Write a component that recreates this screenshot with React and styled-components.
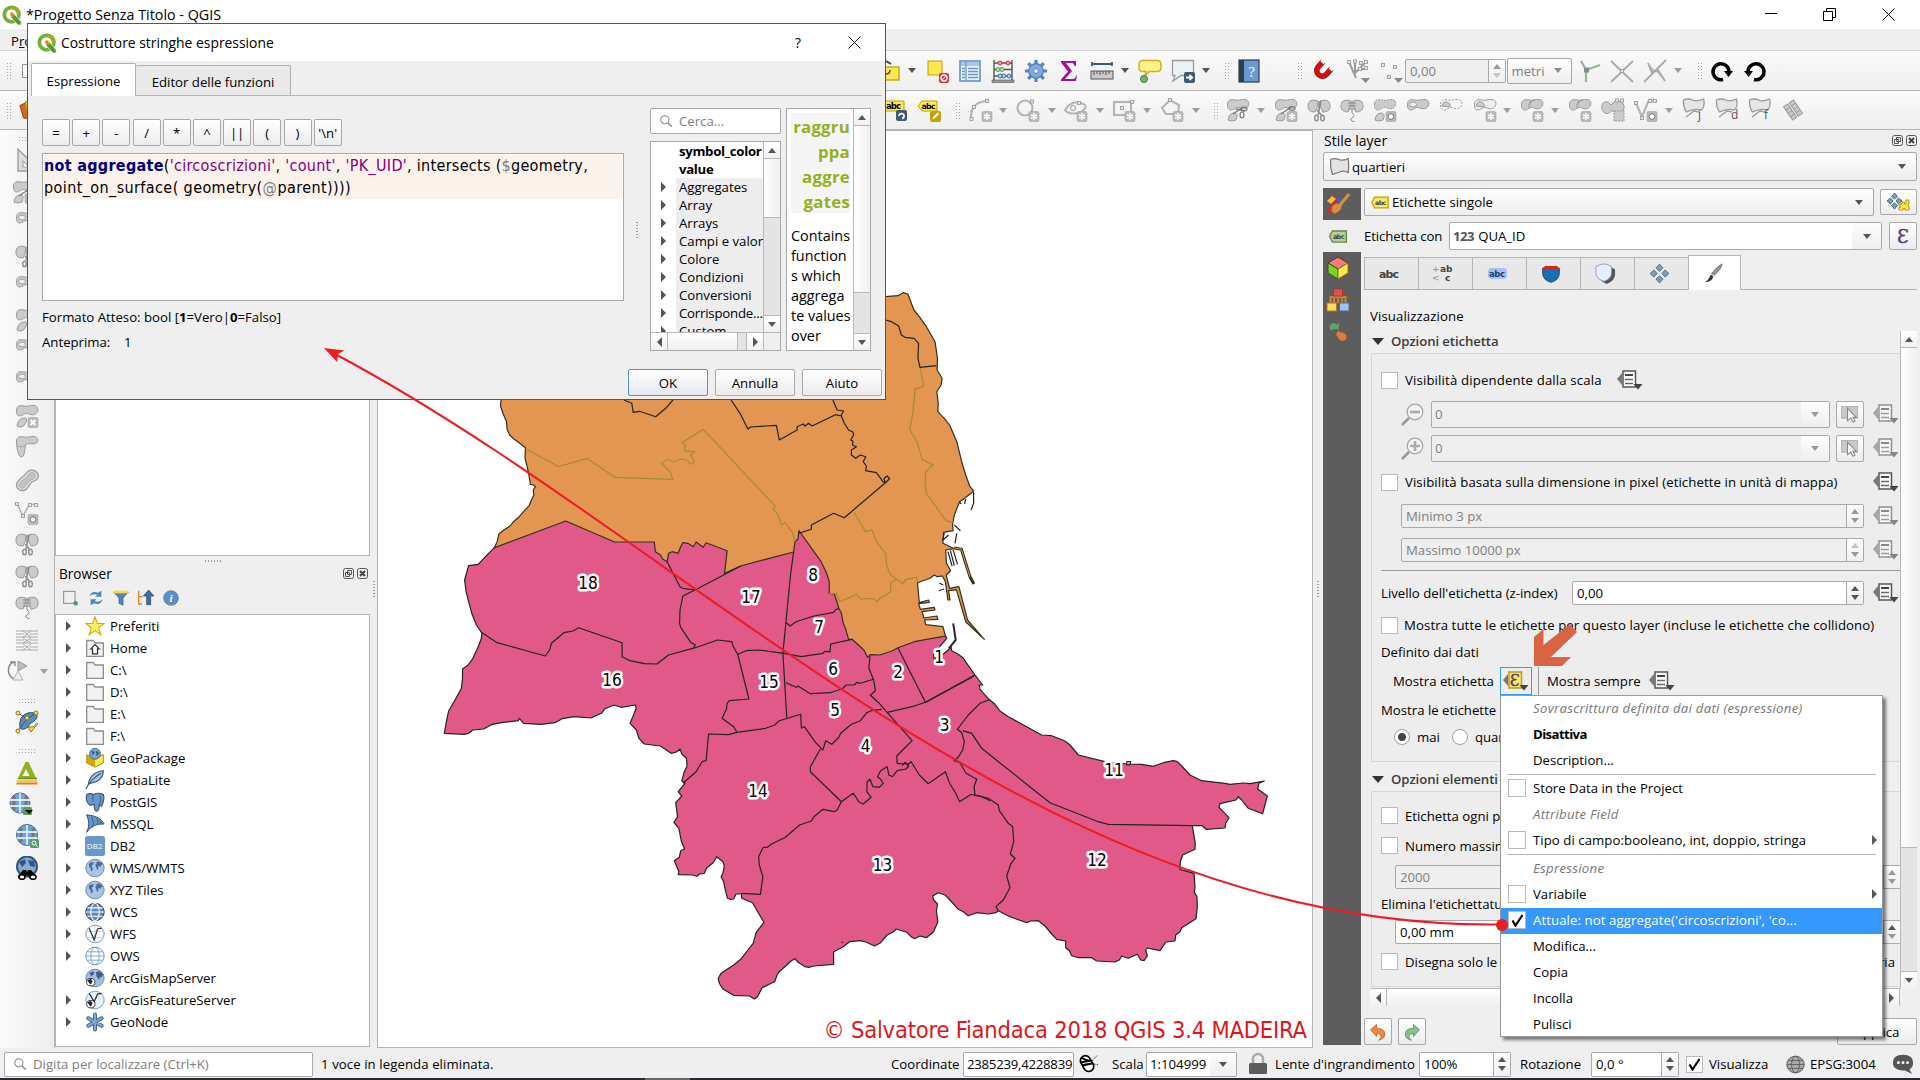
import React from 'react';
import styled, { createGlobalStyle, css } from 'styled-components';

const UI = "'Open Sans','Noto Sans',sans-serif";
const TAHOMA = "'DejaVu Sans Condensed','DejaVu Sans',sans-serif";

const Global = createGlobalStyle`
  *{box-sizing:border-box}
  html,body{margin:0;padding:0;background:#efefef;overflow:hidden}
  body{font:13.2px/18px ${UI};color:#000}
  svg{display:block;flex:none}
`;

/* ---------- generic pieces ---------- */
const Screen = styled.div`position:relative;width:1920px;height:1080px;display:flex;flex-direction:column;background:#efefef;overflow:hidden;`;
const TitleBar = styled.div`height:29px;background:#fff;display:flex;align-items:center;padding-left:2px;font-size:14.3px;flex:none;`;
const TitleText = styled.span`margin-left:4px;flex:1;white-space:nowrap;letter-spacing:${p => p.$ls || 0}px;`;
const WinButtons = styled.div`display:flex;gap:46px;padding-right:25px;`;
const MenuBar = styled.div`height:22px;padding:3px 0 0 11px;flex:none;border-bottom:1px solid #d5d5d5;u{text-decoration:underline}`;
const ToolRow = styled.div`height:${p => p.$h}px;flex:none;display:flex;align-items:center;background:linear-gradient(#fafafa,#efefef);border-bottom:${p => p.$b}px solid #b5b5b5;`;
const Slot = styled.div`flex:none;width:${p => p.$w}px;margin-left:${p => p.$ml}px;display:flex;justify-content:center;align-items:center;`;
const VSlot = styled.div`flex:none;height:${p => p.$w}px;margin-top:${p => p.$ml}px;margin-left:${p => p.$x || 0}px;display:flex;justify-content:center;align-items:center;`;
const Caret = styled.i`flex:none;width:0;height:0;border:${p => p.$s || 4.5}px solid transparent;border-top:${p => (p.$s || 4.5) + 1}px solid ${p => p.$c || '#555'};border-bottom:0;`;
const CaretUp = styled.i`flex:none;width:0;height:0;border:4.5px solid transparent;border-bottom:5.5px solid ${p => p.$c || '#555'};border-top:0;`;
const CaretR = styled.i`flex:none;width:0;height:0;border:5px solid transparent;border-left:5.5px solid #555;border-right:0;`;
const CaretL = styled.i`flex:none;width:0;height:0;border:5px solid transparent;border-right:5.5px solid #555;border-left:0;`;
const Grip = styled.i`width:${p => (p.$flat ? 18 : 5)}px;height:${p => (p.$flat ? 5 : 17)}px;background:radial-gradient(circle,#a9a9a9 .6px,transparent .9px) 0 0/3px 3px;`;
const Text = styled.span`white-space:nowrap;flex:none;width:${p => (p.$w ? p.$w + 'px' : 'auto')};margin-left:${p => p.$ml || 0}px;letter-spacing:${p => p.$ls || 0}px;`;

const box = css`border:1px solid #a9a9a9;border-radius:2px;display:flex;align-items:center;flex:none;`;
const Field = styled.div`${box}
  width:${p => p.$w}px;height:${p => p.$h || 25}px;margin-left:${p => p.$ml || 0}px;padding-left:${p => (p.$pl ?? 4)}px;letter-spacing:${p => p.$ls || 0}px;
  background:${p => (p.$grad ? 'linear-gradient(#fff,#ededed)' : p.$off ? '#efefef' : '#fff')};
  color:${p => (p.$off ? '#7f7f7f' : '#000')};border-color:${p => (p.$focus ? '#4b93df' : '#a9a9a9')};overflow:hidden;`;
const Grow = styled.span`flex:1;white-space:nowrap;overflow:hidden;`;
const Arrow = styled.span`align-self:stretch;flex:none;width:${p => p.$w || 25}px;display:flex;align-items:center;justify-content:center;background:${p => (p.$plain ? 'none' : 'linear-gradient(#fdfdfd,#efefef)')};`;
const Steps = styled.span`align-self:stretch;flex:none;width:17px;display:flex;flex-direction:column;align-items:center;justify-content:center;gap:4px;border-left:1px solid #a9a9a9;background:linear-gradient(#fdfdfd,#efefef);`;
const Button = styled.div`${box}justify-content:center;width:${p => p.$w}px;height:${p => p.$h}px;margin-left:${p => p.$ml || 0}px;
  background:${p => (p.$primary ? 'linear-gradient(#fff,#e3e8f0)' : 'linear-gradient(#fff,#ececec)')};border-color:${p => (p.$primary ? '#4b93df' : '#a9a9a9')};`;
const Check = styled.span`width:${p => p.$s || 17}px;height:${p => p.$s || 17}px;flex:none;background:#fff;border:1px solid #b9b9b9;display:flex;align-items:center;justify-content:center;`;
const Radio = styled.span`width:16px;height:16px;border-radius:50%;flex:none;border:1px solid #a0a0a0;background:${p => (p.$on ? 'radial-gradient(circle,#444 3.6px,#fff 4.4px)' : '#fff')};margin-left:${p => p.$ml || 0}px;`;
const Tick = () => <svg width="13" height="13" viewBox="0 0 13 13"><path d="M1.5 6.5L4.5 11.5L11.5 1" fill="none" stroke="#000" strokeWidth="2.2" /></svg>;

const Spin = ({ w, h = 24, ml, off, up, down, children }) => (
  <Field $w={w} $h={h} $ml={ml} $off={off}><Grow>{children}</Grow><Steps><CaretUp $c={up || (off ? '#999' : '#555')} /><Caret $c={down || (off ? '#999' : '#555')} /></Steps></Field>
);

/* ---------- scroll bars ---------- */
const SBarV = styled.div`width:${p => p.$w || 17}px;flex:none;display:flex;flex-direction:column;border-left:1px solid #b8b8b8;background:#e4e4e4;`;
const SBarH = styled.div`height:18px;flex:none;display:flex;border-top:1px solid #b8b8b8;background:#e4e4e4;`;
const SBtn = styled.div`flex:none;${p => (p.$h ? 'width' : 'height')}:17px;background:linear-gradient(#fff,#f1f1f1);display:flex;align-items:center;justify-content:center;
  border:0 solid #b8b8b8;${p => p.$e}:1px solid #b8b8b8;`;
const SHandle = styled.div`flex:none;${p => (p.$h ? 'width' : 'height')}:${p => p.$s}px;background:linear-gradient(to ${p => (p.$h ? 'bottom' : 'right')},#fff,#efefef);border-${p => (p.$h ? 'right' : 'bottom')}:1px solid #b8b8b8;`;
const SGap = styled.div`flex:1;`;

/* ---------- icons ---------- */
const I = ({ s = 24, w, h, vb = '0 0 24 24', children }) => <svg width={w || s} height={h || s} viewBox={vb}>{children}</svg>;
const Q = ({ s = 20 }) => (
  <I s={s}><circle cx="11.5" cy="11.5" r="8.7" fill="none" stroke="#7aae3a" strokeWidth="4.6" />
    <path d="M11.5 2.8a8.7 8.7 0 0 1 8.7 8.7" fill="none" stroke="#93b023" strokeWidth="4.6" />
    <path d="M11 11h4l8 9v4h-4L11 15z" fill="#589632" stroke="#fff" strokeWidth=".8" /><path d="M10 9h4.500l-1.300 1.300 2.500 2.500-2 2-2.500-2.500L10 13.500z" fill="#ee7913" /></I>
);
const G = '#9b9b9b';
const F = '#cbcbcb';
const Blob = ({ y = 0, d }) => <path transform={`translate(0 ${y})`} d="M1.500 6C1.500 2 5 1 9 2s6-1 10-.5S24 6 21.500 9s-6 1.500-9 .5-5 3-8 2.500S1.500 8.500 1.500 6z" fill={F} stroke={G} strokeDasharray={d} />;
const Badge = ({ t = 'star' }) => (
  <g><rect x="13" y="13.500" width="10" height="10" rx="1.500" fill="#b9b9b9" stroke="#a3a3a3" strokeWidth=".6" />
    {t === 'star' && <path d="M18 15v7M15 16.700l6 3.600M21 16.700l-6 3.600" stroke="#fff" strokeWidth="1.600" />}
    {t === 'x' && <path d="M15.500 16l5 5M20.500 16l-5 5" stroke="#fff" strokeWidth="2" />}
    {t === 'ring' && <circle cx="18" cy="18.500" r="2.800" fill="#fff" stroke="#777" />}</g>
);
const Scis = () => <g fill="none" stroke="#8b8b8b" strokeWidth="1.400"><path d="M12 3v11M14 3l-3 14M10 12l5 6" /><ellipse cx="9.500" cy="20" rx="1.800" ry="2.800" /><ellipse cx="15.500" cy="20" rx="1.800" ry="2.800" /></g>;
const Node = ({ x, y }) => <rect x={x - 1.5} y={y - 1.5} width="3" height="3" fill="#e8e8e8" stroke={G} strokeWidth=".9" />;
const Globe = ({ s = 20, fill = '#a9c4e4', line = '#33557c', land, shiny }) => (
  <I s={s}><ellipse cx="12" cy="12" rx="11" ry="10.500" fill={fill} stroke={land ? '#6a8fb8' : line} strokeWidth="1.200" />
    {!land && <g fill="none" stroke={shiny ? '#fff' : line} strokeWidth={shiny ? 1.3 : 1}><ellipse cx="12" cy="12" rx="5" ry="10.500" /><path d="M1 12h22M3 7h18M3 17h18" /></g>}
    {land && <path d="M4.500 7l3-2 3 .5-1 2.500-1.500 1 .5 2 1 1.800-1.200 3.200-1.300-.5-.3-3.500-1.700-1.200zM13.500 5l2.500-1.200 1.500 1.200 3 .5.5 2.500-2 1-.5 2.500-1.200-1.800-1.600.6.300 2.700-1.300 1.500-1.200-3.500-1.200-2.500 1.700-1.800z" fill="#4a6c94" />}</I>
);

const ic = {
  selpart: <I w={14} h={24} vb="10 0 14 24"><path d="M10 2l5 3" stroke="#5b3b6e" strokeWidth="2" /><rect x="8" y="8" width="15" height="13" fill="#fce94f" stroke="#c4a000" strokeWidth="1.300" /><path d="M10 15q4 0 4-4" stroke="#5b3b6e" strokeWidth="1.600" fill="none" /></I>,
  caret: <Caret />,
  gcaret: <Caret $c="#9d9d9d" />,
  grip: <Grip />,
  desel: <I><rect x="2" y="2" width="14" height="14" fill="#fce94f" stroke="#c4a000" /><rect x="13" y="14" width="10" height="10" rx="2" fill="#d8383f" /><circle cx="18" cy="19" r="3" fill="none" stroke="#fff" strokeWidth="1.300" /><path d="M16 21l4-4" stroke="#fff" /></I>,
  table: <I><rect x="2" y="2" width="20" height="20" fill="#e8f0f8" stroke="#5d8bbd" strokeWidth="1.500" /><rect x="3" y="3" width="18" height="4" fill="#a9c8e8" /><path d="M8 3v18M4 9.500h3M10 9.500h10M4 12.500h3M10 12.500h10M4 15.500h3M10 15.500h10M4 18.500h3M10 18.500h10" stroke="#6a98c9" strokeWidth="1.300" /></I>,
  abacus: <I><path d="M3 1v21M21 1v21M3 4h18M3 10.500h18M3 17h18" stroke="#555" strokeWidth="1.400" /><rect x="1" y="21" width="22" height="2.500" fill="#999" stroke="#555" strokeWidth=".6" /><g strokeWidth="1"><g fill="#f0a0a0" stroke="#b33"><circle cx="9" cy="4" r="2" /><circle cx="17" cy="4" r="2" /></g><g fill="#b7e6b0" stroke="#4a9a40"><circle cx="7" cy="10.500" r="2" /><circle cx="11" cy="10.500" r="2" /></g><g fill="#a9cdf0" stroke="#37729f"><circle cx="9" cy="17" r="2" /><circle cx="13" cy="17" r="2" /><circle cx="18" cy="17" r="2" /></g></g></I>,
  gear: <I><g stroke="#5585c0" strokeWidth="3.200"><path d="M12 1v22M1 12h22M4.200 4.200l15.600 15.600M19.800 4.200L4.200 19.800" /></g><circle cx="12" cy="12" r="7.200" fill="#7fabe0" stroke="#5585c0" strokeWidth="1.400" /><circle cx="12" cy="12" r="2.300" fill="#fff" stroke="#5585c0" /></I>,
  sigma: <I><path d="M4 2h15v5h-1.500q-.5-3-3-3H9l6 8-7 8h8q2.500 0 3-3.500H20L19 22H4v-1.500L11 12.500 4 3.500z" fill="#a111a1" /></I>,
  ruler: <I><path d="M2 5h20M2 3v4M22 3v4" stroke="#3d5a75" strokeWidth="1.800" /><rect x="1" y="12" width="22" height="8" fill="#c9c9c9" stroke="#555" /><path d="M4 12v4M7 12v3M10 12v4M13 12v3M16 12v4M19 12v3" stroke="#555" /></I>,
  tip: <I><path d="M5 1.500h14q4 0 4 4v3q0 4-4 4h-8L7 17l1-4.500H5q-4 0-4-4v-3q0-4 4-4z" fill="#fff08a" stroke="#d2b01c" strokeWidth="1.500" /><circle cx="6" cy="20" r="3.500" fill="#7ab070" stroke="#4c7a44" /></I>,
  note: <I><path d="M1.500 1.500h21v15H10L2 22l2-5.500H1.500z" fill="#eaf3f5" stroke="#9a9a9a" strokeWidth="1.300" /><rect x="13" y="13" width="11" height="11" rx="2" fill="#3d5a75" /><path d="M15 18.500h6M18.500 16l2.700 2.500-2.700 2.500" stroke="#fff" strokeWidth="1.800" fill="none" /></I>,
  book: <I><rect x="2" y="1" width="20" height="22" fill="#6a98cf" stroke="#2c3e50" strokeWidth="1.200" /><rect x="2" y="1" width="5" height="22" fill="#2c3e50" /><text x="14.500" y="17.500" fontSize="15" fill="#fff" textAnchor="middle" fontFamily="Liberation Serif">?</text></I>,
  magnet: <I><g transform="rotate(42 12 12)" fill="none"><path d="M6.500 4v7.500a5.500 5.500 0 0 0 11 0V4" stroke="#8e0b0b" strokeWidth="5.600" /><path d="M6.500 5v6.500a5.500 5.500 0 0 0 11 0V5" stroke="#d10f0f" strokeWidth="4.600" /><path d="M4.300 4.500h4.400M15.300 4.500h4.400" stroke="#fff" strokeWidth="2.600" /></g></I>,
  topo: <I w={26}><g stroke={G} strokeWidth="2" fill="none"><path d="M3 3l7 16M9 3v11l10-10M13 10h7" /></g><Node x={3} y={3} /><Node x={9} y={2.500} /><Node x={15} y={4} /><Node x={20} y={3} /><Node x={14} y={10} /><Node x={20} y={9} /><path d="M15 19h9l-4.500 5z" fill="#888" /></I>,
  dots: <I w={26}><Node x={4} y={6} /><Node x={16} y={8} /><Node x={10} y={18} /><path d="M15 19h9l-4.500 5z" fill="#888" /></I>,
  branch: <I><path d="M3 2l5 9v12M8 11l14-5" stroke="#7fc28a" strokeWidth="2.200" fill="none" /><rect x="6" y="8.500" width="5" height="5" fill="#8a8a8a" /></I>,
  cross: <I><path d="M1 2l22 21M23 2L1 23" stroke="#a9a9a9" strokeWidth="1.800" /><Node x={12} y={12} /></I>,
  cross2: <I><path d="M23 1L1 23M5 4l4 10 6-3 7 11" stroke="#a9a9a9" strokeWidth="1.800" fill="#bbb" /></I>,
  redo: <I><path d="M14 20.500A8 8 0 1 1 20 13" fill="none" stroke="#000" strokeWidth="3.500" /><path d="M15 12h9l-4.500 6z" /></I>,
  undo: <I><path d="M10 20.500A8 8 0 1 0 4 13" fill="none" stroke="#000" strokeWidth="3.500" /><path d="M9 12H0l4.500 6z" /></I>,
  abcA: <I w={22} h={24} vb="2 0 22 24"><path d="M-3 3h24v10H-3z" fill="#fce94f" stroke="#c4a000" /><text x="3" y="11" fontSize="8.500" fontWeight="700" fontFamily="DejaVu Sans" textLength="15">abc</text><rect x="13" y="12" width="11" height="11" rx="2" fill="#3d5a75" /><path d="M16 18a2.500 2.500 0 1 1 3 2.500" stroke="#fff" strokeWidth="1.800" fill="none" /></I>,
  abcB: <I><path d="M1 8l4-5h15v10H5z" fill="#fce94f" stroke="#c4a000" /><text x="4.500" y="11" fontSize="7.800" fontWeight="700" fontFamily="DejaVu Sans" textLength="14">abc</text><rect x="13" y="13" width="11" height="11" rx="2" fill="#c8a208" /><path d="M15.500 21.500l1-3 4-4 1.500 1.500-4 4z" fill="#fff" /></I>,
  curve: <I><path d="M2 21Q1 4 18 3" fill="none" stroke="#b5b5b5" strokeWidth="2.200" /><Node x={2.500} y={21} /><Node x={5} y={9} /><Node x={18} y={3} /><Badge /></I>,
  circ: <I><circle cx="9" cy="10" r="7.500" fill="none" stroke="#b5b5b5" strokeWidth="2.200" /><Node x={16} y={3.500} /><Badge /></I>,
  elli: <I><path d="M1 12Q8 2 17 5t0 9Q6 18 1 12z" fill="none" stroke="#b5b5b5" strokeWidth="2" /><circle cx="9" cy="10" r="2.500" fill="none" stroke={G} /><Node x={15} y={5} /><Badge /></I>,
  rect: <I><rect x="2" y="4" width="17" height="13" fill="none" stroke="#b5b5b5" strokeWidth="2.200" /><Node x={10} y={10} /><Node x={20} y={4} /><Badge /></I>,
  poly: <I><path d="M2 10L10 2l9 5-1 9H6z" fill="none" stroke="#b5b5b5" strokeWidth="2.200" /><Node x={10} y={2} /><Badge /></I>,
  b1: <I><Blob /><path d="M2 22q1-7 6-7t2 7q-4 2-8 0z" fill={F} stroke={G} /><path d="M7 16l10-7M10 11l9 2" stroke="#777" strokeWidth="1.300" /><ellipse cx="18" cy="11" rx="3" ry="1.800" fill="none" stroke="#777" strokeWidth="1.200" /><ellipse cx="16" cy="17" rx="2" ry="3" fill="none" stroke="#777" strokeWidth="1.200" /></I>,
  b2: <I><Blob /><path d="M2 22q1-7 6-7t2 7q-4 2-8 0z" fill={F} stroke={G} /><path d="M7 16l10-7" stroke="#777" strokeWidth="1.300" /><ellipse cx="18" cy="10.500" rx="3" ry="1.800" fill="none" stroke="#777" strokeWidth="1.200" /><Badge /></I>,
  sc: <I><path d="M11 3q-9-3-10 4t7 7q3-4 3-11zM13 3q9-3 10 4t-7 7q-3-4-3-11z" fill={F} stroke={G} /><Scis /></I>,
  stitch: <I><path d="M11 3q-9-3-10 4t7 7q3-4 3-11zM13 3q9-3 10 4t-7 7q-3-4-3-11z" fill={F} stroke={G} /><path d="M8 5h8M8 8h8M8 11h8M12 3v12q4 3 0 5t3 4" stroke="#8b8b8b" fill="none" /></I>,
  ring: <I><Blob d="2 1" /><path d="M2 22q1-7 6-7t2 7q-4 2-8 0z" fill={F} stroke={G} /><Badge t="ring" /></I>,
  hole: <I><Blob /><ellipse cx="7" cy="6.500" rx="3.500" ry="2.500" fill="#eee" stroke={G} /></I>,
  dash: <I><path d="M1.500 6C1.500 2 5 1 9 2s6-1 10-.5S24 6 21.500 9s-6 1.500-9 .5-5 3-8 2.500S1.500 8.500 1.500 6z" fill="none" stroke={G} strokeDasharray="2 1.500" /><path d="M3 8q1-5 5-4t3 5z" fill={F} stroke={G} /></I>,
  offs: <I><path d="M1.500 6C1.500 2 5 1 9 2s6-1 10-.5S24 6 21.500 9s-6 1.500-9 .5-5 3-8 2.500S1.500 8.500 1.500 6z" fill="#eee" stroke={G} /><path d="M3 8q1-5 5-4t3 5z" fill={F} stroke={G} /><Badge /></I>,
  mrg: <I><Blob /><path d="M9 10q0-8 6-8" fill="none" stroke={G} strokeWidth="1.300" /><Badge /></I>,
  msel: <I><path d="M1 8q0-5 6-4l3 3 4-4q8-1 9 5t-6 7q-5 0-6-3-3 5-7 3t-3-7z" fill={F} stroke={G} /><Node x={16} y={2.500} /><Node x={21} y={2.500} /><rect x="13" y="13" width="10" height="10" fill={F} stroke={G} strokeDasharray="2 1" /></I>,
  vert: <I><path d="M2 5l6 14L14 4l7-1" stroke="#b5b5b5" strokeWidth="2.200" fill="none" /><Node x={2} y={5} /><Node x={8} y={20} /><Node x={16} y={3} /><Node x={21} y={3} /><Badge t="ring" /></I>,
  vertL: <I><path d="M2 3l6 12L14 4l7-1" stroke="#b5b5b5" strokeWidth="1.600" fill="none" /><Node x={2} y={3} /><Node x={8} y={15} /><Node x={15} y={4} /><Node x={21} y={4} /><Badge t="ring" /></I>,
  sail: l => <I><path d="M1.500 2q5-2 9 0t11-1q2 7-2 11-8-2-15 2Q1 9 1.500 2z" fill="#e6e6e6" stroke={G} strokeWidth="1.300" /><path d="M4 19l8-6 5 1" fill="none" stroke={G} strokeWidth="1.300" /><text x="16" y="20.500" fontSize="12" fill="#555" fontFamily="Open Sans">{l}</text></I>,
  hatch: <I><g transform="rotate(-35 12 12)" fill={F} stroke={G}><rect x="6" y="4" width="5" height="16" /><rect x="13" y="4" width="5" height="16" /><path d="M6 8h5M6 12h5M6 16h5M13 8h5M13 12h5M13 16h5" /></g></I>,
  tri: <I><path d="M3 1v22h22z" fill="#dcdcdc" stroke={G} strokeWidth="1.300" /><path d="M8 13v6h6z" fill="#fff" stroke={G} /></I>,
  del: <I><Blob /><path d="M2 22q1-7 6-8t3 4-5 5q-3 0-4-1z" fill={F} stroke={G} /><Badge t="x" /></I>,
  resh: <I><path d="M1.500 6C1.500 2 5 1 9 2s6-1 10-.5S24 6 21.500 8s-8 0-10 1-1 13-5 13-5-12-5-16z" fill={F} stroke={G} /><path d="M2 11q5 2 9-1" stroke={G} strokeDasharray="2 1" fill="none" /></I>,
  off2: <I><path d="M1.500 17C1.500 11 8 10 10.500 6S18 .5 21.500 4s1.500 8-2.500 9-4 4-7 7.500-10.500 2.500-10.500-3.500z" fill="#ddd" stroke={G} strokeWidth="1.200" /><path d="M4 17c0-4 6-5 8.500-9s5-4.500 7-2.500.5 5-2.500 6-4.500 4-7 7-6 1.500-6-1.500z" fill="#c2c2c2" stroke="#b0b0b0" /></I>,
  grid: <I><path d="M1 3h22M1 9h22M1 15h22M1 22h22M1 6h8M15 6h8M1 12h8M15 12h8M1 19h8M15 19h8M8 3l8 6M16 3l-8 6M8 10l8 5M16 10l-8 5M8 16l8 6M16 16l-8 6" stroke="#a2a2a2" fill="none" strokeWidth=".9" /></I>,
  rot: <I><path d="M8 20A9 9 0 0 1 7 3M3 3h5v4" fill="none" stroke="#8b8b8b" strokeWidth="1.400" /><path d="M11 2l9 5-9 5z" fill="#bbb" stroke={G} /><path d="M11 12l-5 9h10z" fill="#eee" stroke="#b5b5b5" /></I>,
  topoc: <I><path d="M6 8q5-7 14-5 5 4-2 9-3 0-5 5-5 4-8 1-1-5 1-10z" fill="#5f89b8" stroke="#33557c" /><path d="M3 3l9 6 9-6M12 9L3 21" stroke="#33557c" fill="none" /><g fill="#fce94f" stroke="#8a7a10"><circle cx="3" cy="3" r="2" /><circle cx="21" cy="3" r="2" /><circle cx="12" cy="8" r="2" /><circle cx="3" cy="21" r="2" /></g><path d="M13 17l3 5 7-9-5 4z" fill="#fce94f" stroke="#8a7a10" /></I>,
  greentri: <I><path d="M10.500 1h3L21 17H3z" fill="#93b023" /><path d="M11 8l3.500 7h-7z" fill="#f3f3f3" /><path d="M3 17.500h19" stroke="#589632" strokeWidth="1.500" /><path d="M2 20h20" stroke="#f7c832" strokeWidth="2" /><path d="M1.500 22.500h21" stroke="#ee7913" strokeWidth="2" /></I>,
  gadd: <I><circle cx="11" cy="11" r="10" fill="#6fa3dc" stroke="#4a6c94" /><path d="M5 4v14M17 4v14" stroke="#777" strokeWidth="3" /><path d="M1 8h20M1 14h20M11 1v20" stroke="#fff" strokeWidth="1.300" /><rect x="14" y="15" width="9" height="8" rx="1.500" fill="#5a9a5a" /><path d="M16 18h8l-4 4z" /></I>,
  gfind: <I><circle cx="12" cy="11" r="10.500" fill="#6fa3dc" stroke="#4a6c94" /><path d="M6 4v14M18 4v14" stroke="#777" strokeWidth="3" /><path d="M2 8h20M2 14h20M12 1v20" stroke="#fff" strokeWidth="1.300" /><rect x="15" y="15" width="9" height="9" rx="1.500" fill="#5a9a6a" /><circle cx="19" cy="19" r="2" fill="none" stroke="#fff" /><path d="M20.500 20.500l2 2" stroke="#fff" /></I>,
  gbin: <I><circle cx="12" cy="10.500" r="10" fill="#88aad0" stroke="#33557c" strokeWidth="2" /><path d="M4 6l6-3 1 4-4 4zM13 4l6 1 1 6-5-1z" fill="#33557c" /><path d="M8 14h3l1 2 1-2h3l5 6v2h-6l-3-3-3 3H3v-2z" /><ellipse cx="7" cy="21" rx="3" ry="2.300" fill="#fff" stroke="#000" strokeWidth="1.500" /><ellipse cx="18" cy="21" rx="3" ry="2.300" fill="#fff" stroke="#000" strokeWidth="1.500" /></I>,
};

const Placed = ({ items, start = 0, vertical }) => {
  let end = start;
  return items.map(([c, w, node, x], i) => {
    const ml = c - w / 2 - end;
    end = c + w / 2;
    return vertical ? <VSlot key={i} $w={w} $ml={ml} $x={x}>{node}</VSlot> : <Slot key={i} $w={w} $ml={ml}>{node}</Slot>;
  });
};

const Lock = <I s={24}><path d="M7 11V7a5 5 0 0 1 10 0v4" fill="none" stroke="#aaa" strokeWidth="2.500" /><rect x="3" y="11" width="18" height="11" rx="1.500" fill="#5c5c5c" /></I>;
const Mag = ({ s = 16 }) => <I s={s}><circle cx="10" cy="10" r="7" fill="none" stroke="#8a8a8a" strokeWidth="1.800" /><path d="M15 15l7 7" stroke="#8a8a8a" strokeWidth="2.400" /></I>;

const bar1 = [
  [893, 14, ic.selpart], [912, 10, ic.caret], [938, 24, ic.desel], [970, 24, ic.table], [1003, 24, ic.abacus], [1036, 24, ic.gear], [1069, 24, ic.sigma], [1102, 24, ic.ruler], [1125, 10, ic.caret],
  [1150, 24, ic.tip], [1183, 24, ic.note], [1206, 10, ic.caret], [1226, 5, ic.grip], [1249, 24, ic.book], [1299, 5, ic.grip], [1322, 22, ic.magnet], [1358, 26, ic.topo], [1391, 26, ic.dots],
  [1455.500, 101, <Spin w={101} off down="#c4c4c4">0,00</Spin>], [1539, 65, <Field $w={65} $h={26} $grad $off><Text>metri</Text><Grow /><Arrow $plain $w={25}><Caret $c="#8b8b8b" /></Arrow></Field>],
  [1590, 24, ic.branch], [1622, 24, ic.cross], [1655, 24, ic.cross2], [1678, 10, ic.gcaret], [1699, 5, ic.grip], [1721, 22, ic.redo], [1756, 22, ic.undo],
];
const bar2 = [
  [896, 22, ic.abcA], [929, 24, ic.abcB], [957, 5, ic.grip], [981, 22, ic.curve], [1003, 10, ic.gcaret], [1028, 22, ic.circ], [1052, 10, ic.gcaret], [1076, 22, ic.elli], [1100, 10, ic.gcaret], [1124, 22, ic.rect], [1147, 10, ic.gcaret],
  [1172, 22, ic.poly], [1196, 10, ic.gcaret], [1215, 5, ic.grip], [1238, 24, ic.b1], [1261, 10, ic.gcaret], [1286, 24, ic.b2], [1319, 24, ic.sc], [1352, 24, ic.stitch], [1385, 24, ic.ring], [1418, 24, ic.hole], [1451, 24, ic.dash],
  [1485, 24, ic.offs], [1507, 10, ic.gcaret], [1532, 24, ic.mrg], [1555, 10, ic.gcaret], [1580, 24, ic.mrg], [1613, 24, ic.msel], [1646, 24, ic.vert], [1669, 10, ic.gcaret], [1694, 24, ic.sail('j')], [1727, 24, ic.sail('d')], [1760, 24, ic.sail('f')], [1793, 20, ic.hatch],
];
const side = [
  [138, 5, <Grip $flat />], [160, 24, ic.tri], [192, 24, ic.b2, -6], [223, 20, ic.hole], [256, 24, ic.sc], [287, 22, ic.hole], [320, 24, ic.del], [350, 22, ic.hole], [382, 22, ic.hole],
  [416, 24, ic.del], [447, 24, ic.resh], [480, 24, ic.off2], [513, 24, ic.vertL], [544, 24, ic.sc], [576, 24, ic.sc], [607, 24, ic.stitch], [640, 22, ic.grid],
  [671, 24, <>{ic.rot}<Slot $w={10} $ml={8}>{ic.gcaret}</Slot></>, 2], [700, 5, <Grip $flat />], [722, 24, ic.topoc], [750, 5, <Grip $flat />], [773, 24, ic.greentri], [804, 24, ic.gadd, -13], [836, 24, ic.gfind], [868, 24, ic.gbin],
];

/* ---------- left column ---------- */
const Main = styled.div`display:flex;height:918px;flex:none;`;
const SideBar = styled.div`width:54px;flex:none;background:linear-gradient(to right,#fbfbfb,#ededed);overflow:hidden;`;
const LeftDock = styled.div`width:316px;flex:none;display:flex;flex-direction:column;border-left:1px solid #b5b5b5;`;
const LayersBox = styled.div`height:426px;flex:none;background:#fff;border:1px solid #b5b5b5;`;
const HSplit = styled.div`height:9px;display:flex;justify-content:center;align-items:center;flex:none;`;
const DotsH = styled.i`width:18px;height:2px;background:radial-gradient(circle,#9c9c9c .7px,transparent 1px) 0 0/3px 2px;`;
const DotsV = styled.i`width:2px;height:18px;background:radial-gradient(circle,#9c9c9c .7px,transparent 1px) 0 0/2px 3px;`;
const DockTitle = styled.div`height:${p => p.$h}px;flex:none;display:flex;align-items:center;font-size:${p => p.$fs || 13.6}px;padding:0 ${p => p.$pr}px 0 ${p => p.$pl}px;gap:3px;`;
const DockBtn = () => (<><svg width="11" height="11" viewBox="0 0 11 11"><rect x=".5" y=".5" width="10" height="10" rx="2" fill="none" stroke="#555" /><path d="M4.500 2.500h4v4h-4zM2.500 4.500h4v4h-4z" fill="none" stroke="#555" /></svg>
  <svg width="11" height="11" viewBox="0 0 11 11"><rect x=".5" y=".5" width="10" height="10" rx="2" fill="none" stroke="#555" /><path d="M3 3l5 5M8 3l-5 5" stroke="#444" strokeWidth="2" /></svg></>);
const BrowserTools = styled.div`height:32px;display:flex;gap:9px;padding:0 0 1px 8px;align-items:center;flex:none;`;
const Tree = styled.div`height:433px;flex:none;background:#fff;border:1px solid #b5b5b5;`;
const TreeRow = styled.div`height:22px;display:flex;align-items:center;padding-left:10px;`;
const TreeArrow = styled.span`width:19px;flex:none;display:flex;visibility:${p => (p.$hide ? 'hidden' : 'visible')};`;

const Folder = ({ home }) => <I s={20}><path d="M2 22V3h8l2 3h10v16z" fill="#f2f2f2" stroke="#8f8f8f" strokeWidth="1.600" />{home && <path d="M7 13l5-5 5 5h-2v6H9v-6z" fill="#fff" stroke="#333" strokeWidth="1.500" />}</I>;
const browser = [
  ['Preferiti', <I s={20}><path d="M12 1l2.800 8H23l-6.500 5L19 22.500 12 17.500 5 22.500 7.500 14 1 9h8.200z" fill="#fdf06a" stroke="#d0ac00" strokeWidth="1.300" /></I>],
  ['Home', <Folder home />], ['C:\\', <Folder />], ['D:\\', <Folder />], ['E:\\', <Folder />], ['F:\\', <Folder />],
  ['GeoPackage', <I s={20}><path d="M2 8l10 5 10-5v10l-10 5L2 18z" fill="#fce94f" stroke="#8a7a10" /><path d="M2 8l10 5v10L2 18z" fill="#d5a900" /><circle cx="12" cy="7" r="6.500" fill="#7fa6d3" stroke="#33557c" /><path d="M8 3l4 2-3 4zM13 3l4 3-3 4z" fill="#33557c" /></I>],
  ['SpatiaLite', <I s={20}><path d="M4 17Q6 3 22 1q0 12-15 15z" fill="#a9c3e2" stroke="#33557c" strokeWidth="1.300" /><path d="M1 23Q6 12 19 4" stroke="#33557c" strokeWidth="1.300" fill="none" /></I>],
  ['PostGIS', <I s={20}><path d="M2 3q4-2 8 0 6-3 12 0 2 6-2 14l-3-1q0 7-3 7t-3-8l-5 1Q0 11 2 3z" fill="#6a95c6" stroke="#33557c" strokeWidth="1.300" /><path d="M10 3q-2 5 0 9M18 4q2 5-1 12" stroke="#33557c" fill="none" /></I>],
  ['MSSQL', <I s={20}><path d="M2 1q16 1 21 11-14-1-21 10Q7 12 2 1z" fill="#6a95c6" stroke="#33557c" strokeWidth="1.200" /><path d="M8 3q4 7 1 13M14 5q3 5 1 8M18 8q2 3 1 4" stroke="#33557c" fill="none" /></I>],
  ['DB2', <I s={20}><rect width="24" height="24" rx="3" fill="#6a98c9" /><text x="2" y="15" fontSize="9.500" fill="#fff" fontFamily="Open Sans" textLength="19">DB2</text></I>],
  ['WMS/WMTS', <Globe land />], ['XYZ Tiles', <Globe land />], ['WCS', <Globe fill="#5f89b8" line="#22405f" shiny />],
  ['WFS', <I s={20}><ellipse cx="12" cy="12" rx="11" ry="10.500" fill="#fff" stroke="#6a98c9" strokeWidth="1.200" /><path d="M1 9h22M1 16h22M12 1v22" stroke="#b7d0ea" /><path d="M5 5l6 14 4-13 5-1" stroke="#333" strokeWidth="1.500" fill="none" /></I>],
  ['OWS', <Globe fill="#fff" line="#6a98c9" />],
  ['ArcGisMapServer', <I s={20}><ellipse cx="12" cy="12" rx="11" ry="10.500" fill="#a3bfe0" stroke="#6a8fb8" strokeWidth="1.200" /><path d="M5 6l5-2 1 3-3 3zM13 5l4-1.500 5 4-2 4-2-1-1 4-3-4z" fill="#3f6088" /><ellipse cx="7" cy="17" rx="5" ry="4.500" fill="#fff" stroke="#222" /><path d="M3 15l4-2 2 3-2 4-2-2z" fill="#222" /></I>, true],
  ['ArcGisFeatureServer', <I s={20}><ellipse cx="12" cy="12" rx="11" ry="10.500" fill="#e8f1fa" stroke="#6a98c9" /><path d="M5 4l6 10 4-9 5-1" stroke="#333" strokeWidth="1.500" fill="none" /><ellipse cx="7" cy="17" rx="5" ry="4.500" fill="#fff" stroke="#222" /><path d="M3 15l4-2 2 3-2 4-2-2z" fill="#222" /></I>],
  ['GeoNode', <I s={20}><g stroke="#33557c" strokeWidth="4.600" strokeLinecap="round"><path d="M12 3v18M4 7.500l16 9M20 7.500l-16 9" /></g><g stroke="#7fa6d3" strokeWidth="2.800" strokeLinecap="round"><path d="M12 3v18M4 7.500l16 9M20 7.500l-16 9" /></g></I>],
];

/* ---------- map ---------- */
/* the outlines were digitised on three sheets; each has its own origin and scale */
const sheets = { A: [430, 280, 2.8, 3], B: [430, 600, 2.8, 3], C: [880, 560, 3, 3] };
const pts = (...parts) => parts.map(s => {
  const [ox, oy, sx, sy] = sheets[s[0]];
  return s.slice(2).split(' ').map(p => { const [x, y] = p.split(',').map(Number); return `${(ox + x / sx).toFixed(1)},${(oy + y / sy).toFixed(1)}`; }).join(' ');
}).join(' ');

const PINK = pts(
  'A 180,803 155,830 135,853 108,857 97,900 101,935 108,965 118,1003 130,1035 146,1060',
  'B 146,98 143,118 135,140 120,175 107,195 91,207 91,235 88,265 70,300 52,333 46,365 40,400 95,403 108,400 120,390 150,387 172,374 200,368 247,362 250,355 262,370 310,373 350,368 370,356 405,350 450,354 480,340 490,326 515,315 535,322 575,315 577,325 570,345 560,370 578,390 585,415 600,432 645,438 675,460 690,456 700,447 705,462 718,475 720,498 712,515 705,542 714,550 695,575 705,588 688,608 693,650 683,667 697,685 703,720 706,730 713,747 702,752 698,772 684,782 697,815 695,824 735,825 747,829 755,822 768,820 775,803 793,788 803,770 820,785 824,797 820,820 815,830 822,845 828,875 833,895 840,898 850,897 857,882 872,882 873,895 903,908 920,940 935,967 913,998 905,1030 890,1050 870,1078 850,1095 815,1120 807,1135 810,1150 820,1167 850,1186 895,1188 908,1197 917,1190 930,1163 965,1145 972,1125 978,1115 1012,1082 1022,1076 1030,1086 1050,1100 1060,1102 1075,1098 1130,1093 1130,1055 1155,1042 1175,1025 1205,1022 1220,1026 1245,1038 1262,1028 1280,1005 1298,995 1305,987 1335,997 1347,1010 1357,1016 1372,1008 1390,1013 1410,995 1422,965 1418,935 1421,912',
  'C 161,1020 158,1008 175,998 195,1005 210,1020 235,1048 250,1055 265,1067 290,1058 325,1062 348,1058 355,1052 385,1068 440,1088 452,1083 475,1082 495,1098 515,1122 530,1138 557,1143 557,1163 568,1172 575,1187 595,1193 635,1193 650,1203 705,1206 718,1200 725,1188 745,1195 772,1183 782,1200 792,1202 802,1188 797,1170 802,1164 840,1172 858,1146 885,1143 887,1125 900,1115 905,1103 948,1076 952,1040 951,1010 943,998 945,980 942,940 900,928 901,905 908,885 945,868 946,850 937,797 967,797 978,808 1035,804 1037,790 1047,773 1017,742 1020,731 1068,720 1075,710 1085,720 1105,745 1148,761 1162,708 1133,687 1137,670 1153,663 1110,671 1090,669 1050,673 1035,670 965,662 930,645 905,618 890,604 880,602 850,608 820,619 785,613 740,612 675,605 595,585 570,555 555,543 515,527 485,525 440,500 385,470 360,453 345,433 327,418 300,388 298,375 308,375 285,345 250,295 235,283 215,272 213,260 205,270 178,292 162,295 160,284 175,265 200,235 197,228',
  'A 1300,1090 1100,700 600,760 400,700');
const ORANGE = pts('A 205,300 200,350 197,378 205,402 214,424 216,448 223,465 236,478 255,493 267,503 266,535 272,560 277,585 281,613 290,615 295,620 289,630 291,645 284,660 278,676 262,695 248,712 232,727 224,738 207,750 193,762 188,785 180,803 380,723 517,786 628,786 631,815 645,825 652,838 664,845 668,820 678,815 695,820 702,800 708,788 722,790 737,800 745,786 765,802 773,788 832,812 829,840 825,880 870,858 950,835 1018,816 1022,785 1030,778 1033,752 1040,762 1075,815 1095,845 1110,878 1118,905 1118,940 1132,942 1145,985 1152,1000 1157,1030 1163,1045 1172,1078 1182,1078 1215,1110 1225,1132 1232,1124 1260,1125 1295,1112 1310,1103 1360,1084 1443,1068 1436,1040 1388,1034 1385,1020 1422,1018 1419,1008 1383,1014 1378,995 1414,990 1412,982 1373,988 1368,971 1398,967 1396,960 1370,968 1365,908 1400,895 1412,885 1420,890 1435,888 1443,905 1450,960 1456,960 1452,932 1474,929 1500,1025 1552,1078 1505,1020 1481,920 1455,925 1445,885 1458,872 1446,850 1444,810 1468,806 1436,790 1438,757 1465,752 1463,735 1468,705 1483,665 1497,655 1515,640 1522,632 1512,620 1500,585 1490,550 1475,485 1455,435 1440,415 1422,395 1423,370 1419,335 1431,315 1434,295 1420,270 1421,235 1414,185 1390,140 1370,110 1355,90 1338,42 1325,38 1310,47 1275,50 1200,60');
const DARK = [
  'A 543,360 565,370 569,397 587,394 632,410 660,385 680,360',
  'A 843,360 868,400 890,447 897,441 970,436 978,480 1028,450 1028,440 1045,432 1050,438 1060,430 1070,438 1135,404 1152,408 1160,430 1172,450 1184,456 1186,466 1178,480 1184,484 1183,495 1194,500 1180,510 1180,525 1192,535 1205,525 1220,530 1213,545 1222,558 1220,572 1250,578 1262,595 1268,605 1275,608 1287,596 1280,588 1271,596 1275,608 1160,713 1130,700 1068,735 1068,748 1033,760',
  'A 1128,360 1140,390 1158,393 1150,408', 'A 1275,120 1290,124 1312,138 1320,165 1330,172 1355,175 1368,190 1366,235 1372,262 1418,257',
  'B 146,98 188,128 323,168 335,150 340,130 375,98 400,93 416,83 538,128 538,170 560,182 600,191 635,192 668,165 743,143 805,120 845,125 848,137 862,165 893,297 838,302 832,310 830,328 818,355 850,380 860,397',
  'A 664,845 700,920 708,925 742,930 870,858', 'A 742,930 708,948 700,990 699,1030 702,1042 730,1087 743,1095 738,1103', 'B 862,163 885,152 920,150 990,160 1040,170 1100,160 1105,154 1120,155 1122,132 1182,118',
  'A 1018,816 1010,880 997,1020 988,1120', 'B 988,160 999,353', 'A 998,1028 1008,1038 1025,1025 1075,1008 1130,997 1135,990 1145,985',
  'B 997,248 1025,262 1030,258 1065,281 1120,278 1155,266 1165,255 1188,255 1195,247 1205,250 1242,238',
  'B 1232,168 1229,205 1242,240 1247,272 1233,286 1258,310 1280,337 1350,422 1307,468 1308,490 1325,492 1337,490', 'B 1310,143 1387,307 1350,320 1280,337', 'B 1387,307 1525,226', 'C 285,345 270,355 135,428',
  'B 1265,328 1235,332 1223,338 1205,362 1180,373 1150,400 1145,412 1125,433 1108,422 1100,450 1080,428 1048,380 1040,384 1038,343 978,362 965,375 940,385 860,397 835,404 780,402 773,482 762,485 745,515 708,550',
  'B 1093,447 1065,500 1065,515 1152,605', 'B 1152,605 1185,580 1193,592 1200,605 1213,612 1235,592 1223,575 1224,545 1232,538 1240,560 1258,562 1269,550 1262,538 1253,530 1262,512 1280,500 1285,525 1295,530 1308,512 1333,507 1340,498 1330,487 1322,497', 'B 1337,495 1347,485 1370,525 1395,551 1443,515 1455,550 1472,580 1483,605 1515,583 1545,590 1568,602',
  'B 1152,605 1140,630 1133,635 1100,628 1075,650 1068,663 1035,675 995,712 955,733 945,742 933,742 920,770 922,795 932,830 925,883 872,880',
  'C 327,420 300,430 265,465 232,508 245,518 253,545 248,570 235,592 222,602 240,608 258,640 290,658 282,680 285,705 325,715 355,735 358,752 385,790 398,800 401,845 391,882 405,895 393,910 380,948 390,983 370,1020 348,1040 355,1052',
  'C 248,512 275,520 305,565 455,685 510,728 655,785 685,793 937,797',
  'A 1468,735 1485,752', 'A 1475,760 1470,790', 'A 1440,757 1436,780 1452,765', 'A 1450,815 1462,858', 'A 1457,812 1468,857', 'A 1465,810 1477,853', 'A 1522,635 1522,670 1515,690', 'A 1500,657 1497,672', 'A 1483,667 1488,672', 'C 176,92 192,87', 'C 178,70 190,74', 'C 740,605 752,605 750,615 740,615 740,605', 'B 1152,1027 1157,1027',
];
const OLIVE = [
  'A 270,508 360,560 440,535 518,592 680,598 672,575 648,550 665,538 685,545 700,537 718,540 730,553 740,545 730,525 740,515 712,512 715,495 706,488 725,475 765,448 968,680 960,685 975,705 985,735 995,728 1015,758 1022,785',
  'A 1372,262 1382,318 1358,328 1352,400 1343,448 1365,490 1378,538 1408,555 1388,575 1386,610 1390,640 1445,722 1465,727',
  'A 1187,697 1220,755 1238,750 1250,785 1275,820 1280,860 1290,885 1325,912 1330,900 1362,892 1365,905', 'A 1118,940 1138,940 1147,965 1195,943 1205,957 1240,955 1252,965 1260,955 1290,935 1290,910 1308,897',
];
const labels = [[18, 588, 583], [17, 751, 597], [8, 813, 575], [7, 819, 627], [6, 833, 669], [15, 769, 682], [16, 612, 680], [5, 835, 709.500], [4, 865.500, 746], [2, 898, 672], [1, 939, 657], [3, 944.500, 725], [11, 1114, 769.500], [12, 1097, 860], [13, 882.500, 864.500], [14, 758, 791]];

const VSplit = styled.div`width:${p => p.$w}px;flex:none;display:flex;align-items:${p => (p.$top ? 'flex-start' : 'center')};justify-content:center;padding-top:${p => p.$top || 0}px;`;
const Canvas = styled.div`width:936px;flex:none;background:#fff;border:1px solid #b5b5b5;`;

const MapView = () => (
  <Canvas>
    <svg width="934" height="915" viewBox="378 131 934 915">
      <polygon points={PINK} fill="#e15989" stroke="#232323" strokeWidth="1.200" strokeLinejoin="round" />
      <polygon points={ORANGE} fill="#e29652" stroke="#35301c" strokeWidth="1.200" strokeLinejoin="round" />
      <g fill="none" stroke="#a98a34" strokeWidth="1.200">{OLIVE.map(l => <polyline key={l} points={pts(l)} />)}</g>
      <g fill="none" stroke="#232323" strokeWidth="1.200" strokeLinejoin="round">{DARK.map(l => <polyline key={l} points={pts(l)} />)}</g>
      <polyline points={pts('A 1468,804 1488,808 1500,850 1512,890 1523,912')} fill="none" stroke="#35301c" strokeWidth="3" />
      <polyline points={pts('A 1468,804 1488,808 1500,850 1512,890')} fill="none" stroke="#e29652" strokeWidth="1" />
      <polyline points={pts('A 1465,1030 1472,1080 1453,1105')} fill="none" stroke="#35232a" strokeWidth="2" />
      <g fontFamily={TAHOMA} fontSize="17" textAnchor="middle" stroke="#fff" strokeWidth="5" strokeLinejoin="round" paintOrder="stroke">
        {labels.map(([n, x, y]) => <text key={n} x={x} y={y + 6}>{n}</text>)}
      </g>
      <text x="823.500" y="1038" fontFamily={TAHOMA} fontSize="23.500" fill="#e0161b" textLength="483.500">© Salvatore Fiandaca 2018 QGIS 3.4 MADEIRA</text>
    </svg>
  </Canvas>
);

/* ---------- style dock ---------- */
const Dock = styled.div`width:597px;flex:none;display:flex;flex-direction:column;`;
const DockBody = styled.div`display:flex;margin-top:7px;height:857px;flex:none;`;
const Modes = styled.div`width:38px;flex:none;display:flex;flex-direction:column;background:#5d5d5d;`;
const Mode = styled.div`height:${p => p.$h || 32}px;flex:none;display:flex;align-items:center;justify-content:center;padding-right:8px;background:${p => (p.$on ? '#efefef' : 'none')};`;
const Form = styled.div`flex:1;padding-left:3px;display:flex;flex-direction:column;min-width:0;`;
const Line = styled.div`display:flex;align-items:center;flex:none;height:${p => p.$h}px;margin-top:${p => p.$mt || 0}px;padding-left:${p => p.$pl || 0}px;`;
const Tabs = styled.div`display:flex;align-items:flex-end;height:35px;border-bottom:1px solid #b0b0b0;width:553px;flex:none;`;
const Tab = styled.div`width:${p => (p.$on ? 53 : 54)}px;height:${p => (p.$on ? 35 : 32)}px;margin-bottom:${p => (p.$on ? -1 : 0)}px;flex:none;border:1px solid #b5b5b5;border-right-width:${p => (p.$on ? 1 : 0)}px;border-bottom:0;background:${p => (p.$on ? '#fff' : '#e8e8e8')};display:flex;align-items:center;justify-content:center;padding-right:5px;`;
const Area = styled.div`display:flex;margin:0 0 0 6px;height:657px;width:547px;flex:none;`;
const Content = styled.div`width:530px;overflow:hidden;`;
const GroupHead = styled.div`height:${p => p.$h}px;padding:${p => p.$pt || 0}px 0 ${p => p.$pb || 0}px 2px;display:flex;align-items:center;gap:7px;font-weight:600;color:#3c3c3c;letter-spacing:-.1px;`;
const Group = styled.div`height:${p => p.$h}px;margin-left:1px;border:1px solid #d6d6d6;border-right:0;background:#ededed;padding-left:9px;border-radius:2px 0 0 2px;`;
const Rule = styled.div`height:1px;background:#9a9a9a;margin-top:3px;`;
const VRule = styled.i`width:1px;height:28px;background:#9a9a9a;margin-left:6px;`;
const DdButton = styled.div`width:32px;height:28px;border:1px solid #3498fc;margin-left:5px;display:flex;align-items:center;justify-content:center;flex:none;`;
const Spacer = styled.i`flex:none;width:${p => p.$w}px;`;
const TypeTag = styled.b`color:#555;letter-spacing:-.5px;`;

const Dd = ({ dim, eps }) => (
  <svg width="26" height="20" viewBox="0 0 26 20" opacity={dim ? 0.6 : 1}>
    <path d="M0 9l5-6v12z" fill="#777" />
    <rect x="6" y="1" width="12.500" height="16" fill={eps ? '#fce96a' : '#fff'} stroke={eps ? '#b89b10' : '#555'} strokeWidth="1.500" />
    {eps ? <text x="6.800" y="15" fontSize="16" fontWeight="400" fill="#5b3b6e" stroke="#5b3b6e" strokeWidth=".4" fontFamily="DejaVu Serif">Ɛ</text> : <><path d="M8 5h8" stroke="#444" strokeWidth="2" /><path d="M8 9.500h8M8 13.500h8" stroke="#666" strokeWidth="1.300" /></>}
    <path d="M16.500 14h9l-4.500 5.500z" fill="#444" />
  </svg>
);
const ScaleMag = ({ plus }) => <svg width="23" height="23" viewBox="0 0 23 23"><path d="M1 22l7-7" stroke="#999" strokeWidth="2.500" /><circle cx="14" cy="9" r="7.800" fill="#f3f3f3" stroke="#a5a5a5" strokeWidth="1.200" /><path d={plus ? 'M9 9h10M14 4v10' : 'M9 9h10'} stroke="#aaa" strokeWidth="2.600" /></svg>;
const Pick = <I s={20}><rect x="2" y="3" width="19" height="14" fill="#c9c9c9" stroke="#a9a9a9" /><path d="M9 5v15l4-3 2.500 5 2.500-1.500-2.500-4.500h4z" fill="#fff" stroke="#888" strokeWidth="1.300" /></I>;
const ScaleRow = ({ plus }) => (
  <Line $h={34} $pl={20}><ScaleMag plus={plus} /><Spacer $w={7} /><Field $w={399} $h={27} $off $pl={3}><Grow>0</Grow><Arrow $w={28}><Caret $c="#999" /></Arrow></Field>
    <Button $w={28} $h={27} $ml={6}>{Pick}</Button><Spacer $w={9} /><Dd dim /></Line>
);
const AbcTag = ({ c = '#fce96a', b = '#c4a000', w = 18 }) => <svg width={w} height="13" viewBox="0 0 20 14"><path d="M1 7l3-6h15v12H4z" fill={c} stroke={b} strokeWidth="1.500" /><text x="4.500" y="10" fontSize="7" fontWeight="700" fill="#444" textLength="12.500" fontFamily="DejaVu Sans">abc</text></svg>;
const TabAbc = ({ blue }) => <svg width="26" height="20" viewBox="0 0 26 20">{blue && <rect x="4" y="4" width="19" height="11" rx="4" fill="#a9c0f2" />}<text x="13" y={blue ? 13 : 14} fontSize={blue ? 8.5 : 11} fontWeight="700" fill={blue ? '#22406e' : '#444'} textAnchor="middle" fontFamily="DejaVu Sans" textLength={blue ? 16 : 20}>abc</text></svg>;
const Move = ({ s = 20 }) => <I s={s}><g fill="#7d9db5" stroke="#3d6480" strokeWidth="1"><path d="M12 0l4.500 5-4.500 4-4.500-4zM12 24l4.500-5-4.500-4-4.500 4zM0 12l5-4.500L9 12l-4 4.500zM24 12l-5-4.500-4 4.500 4 4.500z" /></g></I>;
const MovePuzzle = () => (
  <svg width="24" height="20" viewBox="0 0 24 20">
    <g fill="#7d9db5" stroke="#3d6480" strokeWidth=".9"><path d="M7.500 1l3 3.500-3 2.500-3-2.500zM7.500 17l3-3.500-3-2.500-3 2.500zM0 9l3.500-3L6 9l-2.500 3zM15 9l-3.500-3L9 9l2.500 3z" /></g>
    <path d="M12 12h3v-2h2.500v2H19V8h3v4h-1v2h1v4h-4v-1.500h-2V18h-4v-2.500h1.500V14H12z" fill="#fce94f" stroke="#b89b10" strokeWidth="1" />
  </svg>
);

const StyleDock = () => (
  <Dock>
    <DockTitle $h={21} $pl={1} $pr={3} $fs={14}><Text>Stile layer</Text><Grow /><DockBtn /></DockTitle>
    <Line $h={29} $mt={1}><Field $w={594} $h={29} $grad $pl={5}><I s={21}><path d="M2 4q5-2 9 0t11-1q1 9 0 16-5-3-9-1-5 2-9 3Q1 12 2 4z" fill="#e3e3e3" stroke="#777" strokeWidth="1.400" /></I><Spacer $w={2} /><Grow>quartieri</Grow><Arrow $w={29} $plain><Caret /></Arrow></Field></Line>
    <DockBody>
      <Modes>
        <Mode><I s={24}><path d="M2 6l8-3 3 8-7 4z" fill="#c9283a" /><path d="M9 4l7 2-3 6z" fill="#3a64a8" /><path d="M1 9l5-5 4 3-5 5z" fill="#e8c33a" /><path d="M7 13q5-4 9 1-1 6-8 8l-4-5z" fill="#d98d4a" stroke="#9a5a20" strokeWidth=".8" /><path d="M23 2L14 13" stroke="#d3933b" strokeWidth="3" /><path d="M2 22l3-7" stroke="#e23" strokeWidth="3" /></I></Mode>
        <Mode $on><AbcTag c="#b9cf9a" b="#6c8452" w={22} /></Mode>
        <Mode $h={31}><I s={24}><path d="M12 1l10 6-10 6L2 7z" fill="#f08080" stroke="#801a1a" /><path d="M2 7l10 6v10L2 17z" fill="#7ed321" stroke="#2a5c10" /><path d="M22 7l-10 6v10l10-6z" fill="#fce94f" stroke="#8a7a10" /></I></Mode>
        <Mode $h={33}><I s={24}><path d="M8 6v10M4.500 8v8M12 6v9M16 6v10M19.500 8v8M5 9h15" stroke="#c98232" strokeWidth="2.200" /><rect x="7.500" y="1" width="9" height="7" fill="#e05050" stroke="#a03030" strokeWidth=".8" /><rect x="1" y="15" width="9.500" height="8" fill="#f5dc5a" stroke="#b9742a" /><rect x="13.500" y="15" width="9.500" height="8" fill="#9cc4ee" stroke="#4a6c94" /></I></Mode>
        <Mode $h={31}><I s={22}><path d="M10 12Q1 11 3 5q3-5 8-1l2-3v8H6q0 3 4 3z" fill="#5fa06c" /><path d="M14 12q9 1 7 7-3 5-8 1l-3-5 2-5z" fill="#e37a33" /></I></Mode>
      </Modes>
      <Form>
        <Line $h={28}><Field $w={510} $h={28} $grad $pl={6}><AbcTag /><Spacer $w={3} /><Grow>Etichette singole</Grow><Arrow $w={29} $plain><Caret /></Arrow></Field>
          <Button $w={37} $h={26} $ml={6}><MovePuzzle /></Button></Line>
        <Line $h={28} $mt={6}><Text $w={85} $ls={-0.1}>Etichetta con</Text><Field $w={433} $h={28} $pl={3}><TypeTag>123</TypeTag><Spacer $w={4} /><Grow>QUA_ID</Grow><Arrow $w={29}><Caret /></Arrow></Field>
          <Button $w={28} $h={28} $ml={7}><svg width="18" height="22"><text x="9" y="18" fontSize="19" textAnchor="middle" fill="#5b3b6e" stroke="#5b3b6e" strokeWidth=".4" fontFamily="DejaVu Serif">Ɛ</text></svg></Button></Line>
        <Line $h={35} $mt={5}><Tabs>
          <Tab><TabAbc /></Tab>
          <Tab><svg width="24" height="22"><g fontSize="9" fontWeight="700" fontFamily="DejaVu Sans" fill="#444"><text x="9" y="9">ab</text><text x="14" y="18">c</text><text x="1" y="9" fill="#888" fontWeight="400">+</text><text x="1" y="18" fill="#888" fontWeight="400">&lt;</text></g></svg></Tab>
          <Tab><TabAbc blue /></Tab>
          <Tab><I s={20}><path d="M2 5q10-4 20 0v6q0 8-10 11Q2 19 2 11z" fill="#1670b8" stroke="#333" /><path d="M2 6l3-4 7 1 7-1 3 4q-10 2-20 0z" fill="#e02020" /></I></Tab>
          <Tab><I s={22}><path d="M5 6q9-6 18 1v5q0 7-9 11-9-4-9-10z" fill="#555" /><path d="M2 4q9-6 17 0v7q0 6-8 9-9-3-9-9z" fill="#e6eeff" stroke="#8c9cc0" /></I></Tab>
          <Tab><Move s={19} /></Tab>
          <Tab $on><I s={21}><path d="M23 1q-1 6-9 13l-3-2Q17 4 23 1z" fill="#999" stroke="#555" strokeWidth=".8" /><path d="M10 13l3 2q-1 6-10 7 5-3 7-9z" fill="#333" /></I></Tab>
        </Tabs></Line>
        <Line $h={31} $pl={6} $mt={10}><Text $ls={0.1}>Visualizzazione</Text></Line>
        <Area>
          <Content>
            <GroupHead $h={22} $pb={2}><Caret $s={6} $c="#333" />Opzioni etichetta</GroupHead>
            <Group $h={409}>
              <Line $h={26} $mt={13}><Check /><Text $ml={7} $w={212} $ls={0.15}>Visibilità dipendente dalla scala</Text><Dd /></Line>
              <Line $h={4} /><ScaleRow /><ScaleRow plus />
              <Line $h={34}><Check /><Text $ml={7} $w={468} $ls={0.085}>Visibilità basata sulla dimensione in pixel (etichette in unità di mappa)</Text><Dd /></Line>
              <Line $h={34} $pl={20}><Spin w={463} off>Minimo 3 px</Spin><Spacer $w={9} /><Dd dim /></Line>
              <Line $h={34} $pl={20}><Spin w={463} off up="#c4c4c4">Massimo 10000 px</Spin><Spacer $w={9} /><Dd dim /></Line>
              <Rule />
              <Line $h={34} $mt={5}><Text $w={191}>Livello dell'etichetta (z-index)</Text><Spin w={292}>0,00</Spin><Spacer $w={9} /><Dd /></Line>
              <Line $h={30}><Check /><Text $ml={6} $ls={0.1}>Mostra tutte le etichette per questo layer (incluse le etichette che collidono)</Text></Line>
              <Line $h={24}><Text>Definito dai dati</Text></Line>
              <Line $h={34} $pl={12}><Text $w={102}>Mostra etichetta</Text><DdButton><Dd eps /></DdButton><VRule /><Text $ml={8} $w={102}>Mostra sempre</Text><Dd /></Line>
              <Line $h={24}><Text>Mostra le etichette capovolte</Text></Line>
              <Line $h={30} $pl={13}><Radio $on /><Text $ml={7}>mai</Text><Radio $ml={12} /><Text $ml={7}>quando ruotata è definita</Text></Line>
            </Group>
            <GroupHead $h={29} $pt={5}><Caret $s={6} $c="#333" />Opzioni elementi</GroupHead>
            <Group $h={196}>
              <Line $h={27} $mt={10}><Check /><Text $ml={7}>Etichetta ogni parte di elementi</Text></Line>
              <Line $h={33}><Check /><Text $ml={7}>Numero massimo di elementi</Text></Line>
              <Line $h={29} $pl={14}><Spin w={506} off>2000</Spin></Line>
              <Line $h={26}><Text>Elimina l'etichettatura</Text></Line>
              <Line $h={29} $pl={14}><Spin w={506} down="#999">0,00 mm</Spin></Line>
              <Line $h={31}><Check /><Text $ml={7}>Disegna solo le etichette</Text><Grow /><Text>ria</Text><Spacer $w={5} /></Line>
            </Group>
          </Content>
          <SBarV><SBtn $e="border-bottom"><CaretUp /></SBtn><SHandle $s={500} /><SGap /><SBtn $e="border-top"><Caret /></SBtn></SBarV>
        </Area>
        <Line $h={18} $pl={6}><HBar><SBtn $h $e="border-right"><CaretL /></SBtn><SHandle $h $s={480} /><SGap /><SBtn $h $e="border-left"><CaretR /></SBtn></HBar></Line>
        <Line $h={27} $mt={12}>
          <Button $w={28} $h={27}><I s={18}><path d="M2 9l8-7v5q11 0 11 8 0 6-8 8 4-3 3-6t-6-3v4z" fill="#f0883a" stroke="#b55a18" /></I></Button>
          <Button $w={28} $h={27} $ml={6}><I s={18}><path d="M22 9l-8-7v5Q3 7 3 15q0 6 8 8-4-3-3-6t6-3v4z" fill="#86bf8c" stroke="#4c8a55" /></I></Button>
          <Grow /><Button $w={80} $h={27}>Applica</Button><Spacer $w={3} />
        </Line>
      </Form>
    </DockBody>
  </Dock>
);
const HBar = styled.div`width:530px;height:18px;display:flex;flex:none;border-top:1px solid #b8b8b8;border-right:1px solid #b8b8b8;background:#f4f4f4;`;

/* ---------- context menu ---------- */
const Menu = styled.div`position:absolute;left:1500px;top:695px;width:383px;height:342px;background:#fff;border:1px solid #9a9a9a;box-shadow:3px 3px 3px rgba(0,0,0,.5);`;
const Item = styled.div`height:26px;display:flex;align-items:center;padding:0 5px 2px ${p => (p.$chk ? 7 : 32)}px;white-space:nowrap;font-style:${p => (p.$head ? 'italic' : 'normal')};font-weight:${p => (p.$b ? 700 : 400)};
  color:${p => (p.$hl ? '#fff' : p.$head ? '#777' : '#000')};background:${p => (p.$hl ? '#3498fc' : 'none')};letter-spacing:${p => (p.$ls || 0)}px;`;
const MenuRule = styled.div`height:1px;margin:0 6px 1px;background:#b5b5b5;`;
const ContextMenu = () => (
  <Menu>
    <Item $head $ls={0.28}>Sovrascrittura definita dai dati (espressione)</Item><Item $b $ls={-0.6}>Disattiva</Item><Item>Description...</Item><MenuRule />
    <Item $chk><Check $s={18} /><Spacer $w={7} />Store Data in the Project</Item><Item $head $ls={0.28}>Attribute Field</Item>
    <Item $chk $ls={0.06}><Check $s={18} /><Spacer $w={7} /><Grow>Tipo di campo:booleano, int, doppio, stringa</Grow><CaretR /></Item><MenuRule />
    <Item $head $ls={0.28}>Espressione</Item><Item $chk><Check $s={18} /><Spacer $w={7} /><Grow>Variabile</Grow><CaretR /></Item>
    <Item $chk $hl $ls={0.09}><Check $s={18}><Tick /></Check><Spacer $w={7} />Attuale: not aggregate('circoscrizioni', 'co...</Item>
    <Item>Modifica...</Item><Item>Copia</Item><Item>Incolla</Item><Item>Pulisci</Item>
  </Menu>
);

/* ---------- expression dialog ---------- */
const Dialog = styled.div`position:absolute;left:27px;top:23px;width:859px;height:377px;background:#efefef;border:1px solid #555;display:flex;flex-direction:column;`;
const DlgTitle = styled.div`height:37px;flex:none;background:#fff;display:flex;align-items:center;padding-left:9px;font-size:13.9px;`;
const DlgTabs = styled.div`height:35px;flex:none;margin:0 3px;display:flex;align-items:flex-end;border-bottom:1px solid #b5b5b5;`;
const DlgTab = styled.div`width:${p => p.$w}px;height:${p => (p.$on ? 33 : 30)}px;margin-bottom:${p => (p.$on ? -1 : 0)}px;padding-top:2px;border:1px solid #b0b0b0;border-bottom:0;border-left-width:${p => (p.$on ? 1 : 0)}px;border-radius:2px 2px 0 0;background:${p => (p.$on ? '#fff' : '#e9e9e9')};display:flex;align-items:center;justify-content:center;`;
const DlgBody = styled.div`display:flex;height:256px;flex:none;padding:12px 0 0 14px;`;
const LeftPane = styled.div`width:582px;flex:none;padding-top:11px;`;
const Ops = styled.div`display:flex;gap:2.2px;`;
const Editor = styled.div`height:148px;margin-top:7px;border:1px solid #a9a9a9;background:#fff;padding:1px;font:16px/22px ${TAHOMA};`;
const Code = styled.div`background:#fcf2ec;height:44px;white-space:nowrap;b{color:#000080}i{color:#800080;font-style:normal}s{color:#808080;text-decoration:none}`;
const CodeLine = styled.div`letter-spacing:${p => p.$ls}px;`;
const Info = styled.div`margin-top:${p => p.$mt}px;height:18px;white-space:pre;`;
const MidPane = styled.div`width:131px;flex:none;display:flex;flex-direction:column;`;
const FuncBox = styled.div`margin-top:7px;height:210px;border:1px solid #a9a9a9;background:#fff;display:flex;flex-direction:column;`;
const FuncTop = styled.div`flex:1;display:flex;min-height:0;`;
const FuncList = styled.div`flex:1;overflow:hidden;`;
const FuncRow = styled.div`height:18px;display:flex;align-items:center;font-weight:${p => (p.$b ? 700 : 400)};`;
const FuncArrow = styled.span`width:25px;flex:none;padding-left:10px;display:flex;`;
const FuncName = styled.span`flex:1;white-space:nowrap;overflow:hidden;padding-left:3px;line-height:18px;background:${p => (p.$g ? '#ededed' : '#fff')};letter-spacing:${p => p.$ls || 0}px;`;
const Corner = styled.div`width:17px;background:#efefef;border-left:1px solid #b8b8b8;`;
const Help = styled.div`width:85px;height:243px;margin-left:5px;border:1px solid #a9a9a9;background:#fff;display:flex;flex:none;`;
const HelpText = styled.div`flex:1;padding:4px 3px 0 4px;overflow:hidden;`;
const HelpHead = styled.div`background:#f5f5f5;color:#93b023;font:700 16.8px/25px ${UI};text-align:right;height:100px;padding-top:1px;white-space:nowrap;letter-spacing:.25px;`;
const HelpP = styled.div`font:14.4px/20px ${UI};margin-top:13px;white-space:nowrap;`;
const DlgButtons = styled.div`display:flex;justify-content:flex-end;gap:7px;padding:17px 3px 0 0;`;

const ExprDialog = () => (
  <Dialog>
    <DlgTitle><Q /><TitleText>Costruttore stringhe espressione</TitleText><Text $w={53}>?</Text>
      <svg width="13" height="13"><path d="M.5 .5l12 12M12.500 .5l-12 12" stroke="#111" /></svg><Spacer $w={24} /></DlgTitle>
    <DlgTabs><DlgTab $on $w={105}>Espressione</DlgTab><DlgTab $w={155}>Editor delle funzioni</DlgTab></DlgTabs>
    <DlgBody>
      <LeftPane>
        <Ops>{['=', '+', '-', '/', '*', '^', '||', '(', ')', "'\\n'"].map(o => <Button key={o} $w={28} $h={27}>{o}</Button>)}</Ops>
        <Editor><Code><CodeLine $ls={0.3}><b>not aggregate</b>(<i>'circoscrizioni'</i>, <i>'count'</i>, <i>'PK_UID'</i>, intersects (<s>$</s>geometry,</CodeLine><CodeLine $ls={0.4}>point_on_surface( geometry(<s>@</s>parent))))</CodeLine></Code></Editor>
        <Info $mt={7}>Formato Atteso: bool [<b>1</b>=Vero|<b>0</b>=Falso]</Info><Info $mt={7}>Anteprima:    1</Info>
      </LeftPane>
      <VSplit $w={26}><DotsV /></VSplit>
      <MidPane>
        <Field $w={131} $h={26} $pl={8}><Mag s={14} /><Text $ml={6}><Muted>Cerca...</Muted></Text></Field>
        <FuncBox><FuncTop><FuncList>
          {[['symbol_color', 1], ['value', 1], ['Aggregates'], ['Array'], ['Arrays'], ['Campi e valori'], ['Colore'], ['Condizioni'], ['Conversioni'], ['Corrisponde...'], ['Custom']].map(([n, b]) => (
            <FuncRow key={n} $b={b}><FuncArrow>{!b && <CaretR />}</FuncArrow><FuncName $g={!b} $ls={b ? -0.3 : n.endsWith('...') ? -0.2 : 0}>{n}</FuncName></FuncRow>))}
        </FuncList><SBarV><SBtn $e="border-bottom"><CaretUp /></SBtn><SHandle $s={59} /><SGap /><SBtn $e="border-top"><Caret /></SBtn></SBarV></FuncTop>
          <SBarH><SBtn $h $e="border-right"><CaretL /></SBtn><SHandle $h $s={70} /><SGap /><SBtn $h $e="border-left"><CaretR /></SBtn><Corner /></SBarH></FuncBox>
      </MidPane>
      <Help><HelpText><HelpHead>raggru<br />ppa<br />aggre<br />gates</HelpHead><HelpP>Contains<br />function<br />s which<br />aggrega<br />te values<br />over</HelpP></HelpText>
        <SBarV><SBtn $e="border-bottom"><CaretUp /></SBtn><SHandle $s={167} /><SGap /><SBtn $e="border-top"><Caret /></SBtn></SBarV></Help>
    </DlgBody>
    <DlgButtons><Button $w={80} $h={27} $primary>OK</Button><Button $w={80} $h={27}>Annulla</Button><Button $w={80} $h={27}>Aiuto</Button></DlgButtons>
  </Dialog>
);
const Muted = styled.span`color:#808080;`;

/* ---------- status bar ---------- */
const Status = styled.div`height:30px;flex:none;display:flex;align-items:center;padding:2px 0 0 4px;`;
const TaskStrip = styled.div`height:2px;background:linear-gradient(to right,#2b2b2f 645px,#666 645px,#666 690px,#2b2b2f 690px);`;

const Overlay = styled.svg`position:absolute;left:0;top:0;pointer-events:none;`;

export default function App() {
  return (
    <Screen>
      <Global />
      <TitleBar><Q /><TitleText>*Progetto Senza Titolo - QGIS</TitleText>
        <WinButtons><svg width="12" height="12"><path d="M0 5.500h12" stroke="#000" /></svg><svg width="13" height="13"><path d="M.5 3.500h9v9h-9zM3.500 3.500v-3h9v9h-3" fill="none" stroke="#000" /></svg><svg width="13" height="13"><path d="M.5 .5l12 12M12.500 .5l-12 12" stroke="#000" /></svg></WinButtons></TitleBar>
      <MenuBar>P<u>r</u>ogetto</MenuBar>
      <ToolRow $h={40} $b={1}><Placed items={[[8, 5, ic.grip], [30, 16, <I w={16}><rect x="1" y="2" width="20" height="20" fill="#fff" stroke="#666" /></I>], ...bar1]} /></ToolRow>
      <ToolRow $h={39} $b={1}><Placed items={[[8, 5, ic.grip], [30, 22, <I s={22}><path d="M1 7l9-4v18H5z" fill="#d9652b" stroke="#8f3d12" /><path d="M7 3h14v17H9z" fill="#f2cf2b" stroke="#a8860b" /></I>], ...bar2]} /></ToolRow>
      <Main>
        <SideBar><Placed vertical start={130} items={side} /></SideBar>
        <LeftDock>
          <LayersBox /><HSplit><DotsH /></HSplit>
          <DockTitle $h={17} $pl={4} $pr={2}><Text>Browser</Text><Grow /><DockBtn /></DockTitle>
          <BrowserTools>
            <I s={16}><rect x="1" y="2" width="17" height="18" fill="none" stroke="#888" strokeWidth="1.500" /><circle cx="19" cy="20" r="3.500" fill="#5a9a6a" /></I>
            <I s={16}><path d="M2 10Q5 0 15 4l5-3v9h-9l3-3Q6 5 2 10zM22 14q-3 10-13 6l-5 3v-9h9l-3 3q8 2 12-3z" fill="#4a86c8" /></I>
            <I s={16}><path d="M1 3h22l-8 9v11l-6-3v-8z" fill="#5585c0" stroke="#33557c" /><rect x="1" y="1" width="22" height="4" fill="#f5dc3a" /></I>
            <I s={16}><path d="M1 1v20h5M1 10h6" stroke="#e08a1a" fill="none" strokeWidth="2" /><path d="M16 0l8 9h-5v13h-6V9H8z" fill="#3d6ea5" stroke="#22405f" /></I>
            <I s={16}><circle cx="12" cy="12" r="11" fill="#5f8fcb" stroke="#3d6ea5" /><text x="12" y="18" fontSize="17" fontStyle="italic" fontWeight="700" textAnchor="middle" fill="#fff" fontFamily="Liberation Serif">i</text></I>
          </BrowserTools>
          <Tree>{browser.map(([n, icon, leaf]) => <TreeRow key={n}><TreeArrow $hide={leaf}><CaretR /></TreeArrow>{icon}<Text $ml={5}>{n}</Text></TreeRow>)}</Tree>
        </LeftDock>
        <VSplit $w={7} $top={450}><DotsV /></VSplit>
        <MapView />
        <VSplit $w={10}><DotsV /></VSplit>
        <StyleDock />
      </Main>
      <Status>
        <Field $w={309} $h={25} $pl={8}><Mag s={14} /><Text $ml={6}><Muted>Digita per localizzare (Ctrl+K)</Muted></Text></Field>
        <Text $ml={8} $w={570} $ls={0.08}>1 voce in legenda eliminata.</Text>
        <Text $w={72}>Coordinate</Text><Field $w={111} $pl={3} $ls={-0.25}>2385239,4228839</Field>
        <Slot $w={24} $ml={2}><I s={20}><g transform="rotate(-30 10 12)"><rect x="5" y="2" width="12" height="20" rx="6" fill="#fff" stroke="#000" strokeWidth="2" /><path d="M5 7l12 4M5 11l12 4M8 2l6 8" stroke="#000" strokeWidth="2.500" /></g><path d="M17 8l6-6M19 12l5 1" stroke="#000" strokeDasharray="2 1.500" /></I></Slot>
        <Text $ml={12} $w={34}>Scala</Text><Field $w={91} $pl={3}><Grow>1:104999</Grow><Arrow $w={26}><Caret /></Arrow></Field>
        <Slot $w={20} $ml={11}>{Lock}</Slot><Text $ml={7} $w={144}>Lente d'ingrandimento</Text><Spin w={92} h={25}>100%</Spin>
        <Text $ml={9} $w={71}>Rotazione</Text><Spin w={88} h={25}>0,0 °</Spin><Spacer $w={7} /><Check><Tick /></Check>
        <Text $ml={6} $w={76}>Visualizza</Text><Slot $w={20} $ml={0}><Globe s={19} fill="#aaa" line="#555" /></Slot><Text $ml={5} $w={80}>EPSG:3004</Text>
        <Spacer $w={2} /><I s={22}><path d="M12 2q11 0 11 8.500 0 5-4 7.500l3 5-8-4Q1 19 1 10.500 1 2 12 2z" fill="#555" /><g fill="#fff"><circle cx="7" cy="10.500" r="1.600" /><circle cx="12" cy="10.500" r="1.600" /><circle cx="17" cy="10.500" r="1.600" /></g></I>
      </Status>
      <TaskStrip />
      <ContextMenu />
      <ExprDialog />
      <Overlay width="1920" height="1080">
        <path d="M1534 666V637l9.500-8v16L1570 624l7 8-26 25h20l-9 9z" fill="#d96443" />
        <path d="M335 354C695 545 1035 930 1501 924.500" fill="none" stroke="#ed1c24" strokeWidth="2" />
        <path d="M324 348l20.500 2.500-6.500 3.500-1 8z" fill="#ed1c24" />
        <circle cx="1502" cy="925" r="6" fill="#ed1c24" />
      </Overlay>
    </Screen>
  );
}
